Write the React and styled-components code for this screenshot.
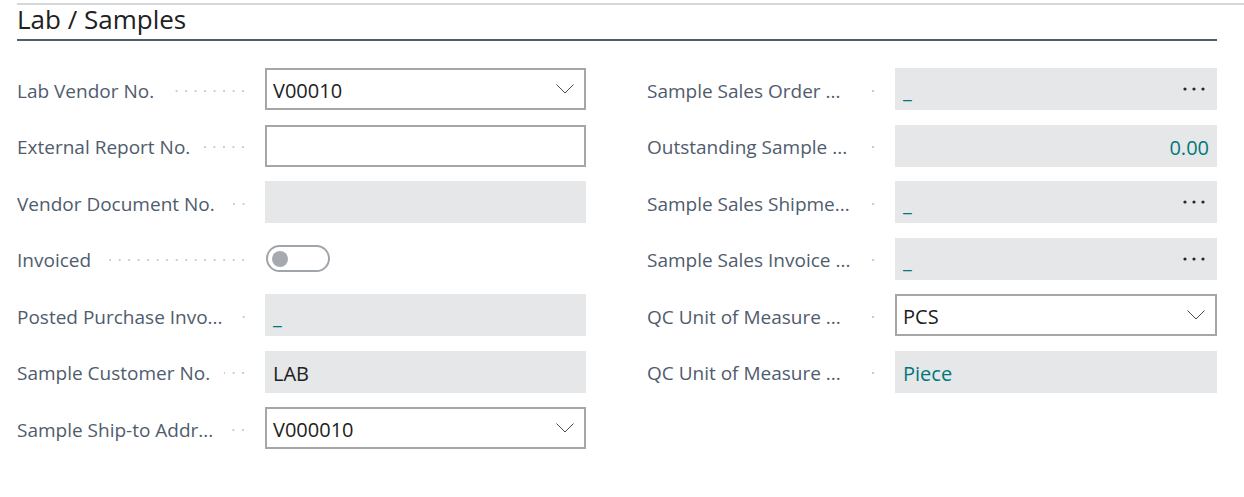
import React from "react";
import styled, { createGlobalStyle } from "styled-components";

const GlobalStyle = createGlobalStyle`
	html, body {
		margin: 0;
		padding: 0;
		background: #ffffff;
	}
	body {
		font-family: "Open Sans", "Noto Sans", sans-serif;
		color: #212121;
	}
`;

const leftFields = [
	{ label: "Lab Vendor No.", kind: "select", value: "V00010" },
	{ label: "External Report No.", kind: "input", value: "" },
	{ label: "Vendor Document No.", kind: "readonly", value: "" },
	{ label: "Invoiced", kind: "toggle" },
	{ label: "Posted Purchase Invo...", kind: "link", value: "_" },
	{ label: "Sample Customer No.", kind: "readonly", value: "LAB" },
	{ label: "Sample Ship-to Addr...", kind: "select", value: "V000010" },
];

const rightFields = [
	{ label: "Sample Sales Order ...", kind: "lookup", value: "_" },
	{ label: "Outstanding Sample ...", kind: "number", value: "0.00" },
	{ label: "Sample Sales Shipme...", kind: "lookup", value: "_" },
	{ label: "Sample Sales Invoice ...", kind: "lookup", value: "_" },
	{ label: "QC Unit of Measure ...", kind: "select", value: "PCS" },
	{ label: "QC Unit of Measure ...", kind: "link", value: "Piece" },
];

const Chevron = () => (
	<svg width="18" height="10" viewBox="0 0 18 10">
		<path d="M0.5 0.5 L9 9 L17.5 0.5" fill="none" stroke="#4a4a4a" strokeWidth="1" />
	</svg>
);

const Dots = () => (
	<svg width="22" height="4" viewBox="0 0 22 4">
		<circle cx="2" cy="2" r="1.6" fill="#262626" />
		<circle cx="11" cy="2" r="1.6" fill="#262626" />
		<circle cx="20" cy="2" r="1.6" fill="#262626" />
	</svg>
);

const Control = ({ kind, value }) => {
	if (kind === "toggle") {
		return (
			<ToggleCell>
				<Toggle>
					<Knob />
				</Toggle>
			</ToggleCell>
		);
	}
	if (kind === "select") {
		return (
			<Box $editable>
				<Value>{value}</Value>
				<Chevron />
			</Box>
		);
	}
	if (kind === "input") {
		return <Box $editable />;
	}
	if (kind === "lookup") {
		return (
			<Box>
				<Value $link>{value}</Value>
				<Dots />
			</Box>
		);
	}
	if (kind === "number") {
		return (
			<Box $right>
				<Value $link>{value}</Value>
			</Box>
		);
	}
	if (kind === "link") {
		return (
			<Box>
				<Value $link>{value}</Value>
			</Box>
		);
	}
	return (
		<Box>
			<Value>{value}</Value>
		</Box>
	);
};

const Field = ({ label, kind, value, $narrow }) => (
	<Row>
		<Label>
			<LabelText>{label}</LabelText>
			<Leader $narrow={$narrow} />
		</Label>
		<Control kind={kind} value={value} />
	</Row>
);

const App = () => (
	<>
		<GlobalStyle />
		<Page>
			<Header>
				<Title>Lab / Samples</Title>
			</Header>
			<Columns>
				<Column>
					{leftFields.map((f, i) => (
						<Field key={i} {...f} />
					))}
				</Column>
				<Column>
					{rightFields.map((f, i) => (
						<Field key={i} {...f} $narrow />
					))}
				</Column>
			</Columns>
		</Page>
	</>
);

const Page = styled.div`
	margin: 3px 0 0 17px;
	border-top: 2px solid #d4d7db;
`;

const Header = styled.div`
	margin-right: 27px;
	height: 34px;
	border-bottom: 2px solid #505c6d;
	display: flex;
	align-items: center;
`;

const Title = styled.h2`
	margin: -6px 0 0;
	font-size: 26px;
	font-weight: 400;
	color: #212121;
	line-height: 30px;
`;

const Columns = styled.div`
	display: grid;
	grid-template-columns: 569px 570px;
	column-gap: 61px;
	margin-top: 27px;
`;

const Column = styled.div`
	display: flex;
	flex-direction: column;
	gap: 14.5px;
`;

const Row = styled.div`
	display: grid;
	grid-template-columns: 231px 1fr;
	column-gap: 17px;
	align-items: center;
	height: 42px;
`;

const Label = styled.div`
	display: flex;
	align-items: center;
	min-width: 0;
	padding-top: 3px;
	font-size: 19px;
	color: #505c6d;
`;

const LabelText = styled.span`
	white-space: nowrap;
	overflow: hidden;
	text-overflow: ellipsis;
	max-width: 214px;
`;

const Leader = styled.span`
	flex: ${(p) => (p.$narrow ? "0 0 8px" : "1")};
	min-width: 6px;
	height: 4px;
	margin-left: ${(p) => (p.$narrow ? "auto" : "14px")};
	background-image: radial-gradient(circle, #c9ccd1 1px, transparent 1.4px);
	background-size: 9.5px 4px;
	background-position: right center;
	background-repeat: repeat-x;
`;

const Box = styled.div`
	box-sizing: border-box;
	height: 42px;
	display: flex;
	align-items: center;
	justify-content: ${(p) => (p.$right ? "flex-end" : "space-between")};
	padding: 3px 10px 0 6px;
	background: ${(p) => (p.$editable ? "#ffffff" : "#e6e7e9")};
	border: 2px solid ${(p) => (p.$editable ? "#a6a6a6" : "transparent")};
	${(p) => p.$right && "padding-right: 6px;"}

	svg {
		margin-top: -3px;
	}
`;

const Value = styled.span`
	font-size: 20px;
	color: ${(p) => (p.$link ? "#00787b" : "#212121")};
	white-space: nowrap;
`;

const ToggleCell = styled.div`
	display: flex;
	align-items: center;
	height: 42px;
	padding-left: 1px;
`;

const Toggle = styled.div`
	box-sizing: border-box;
	width: 64px;
	height: 27px;
	border: 2px solid #a0a4ab;
	border-radius: 14px;
	display: flex;
	align-items: center;
	padding-left: 4px;
`;

const Knob = styled.div`
	width: 16px;
	height: 16px;
	border-radius: 50%;
	background: #a6a9b1;
`;

export default App;
